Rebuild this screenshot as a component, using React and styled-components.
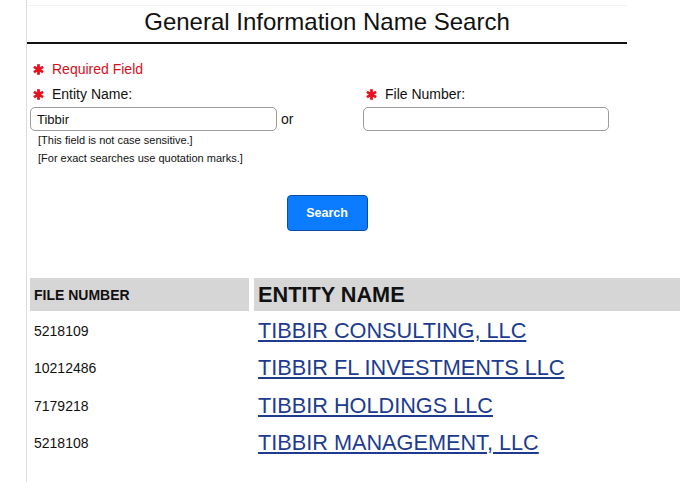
import React from 'react';
import styled, { createGlobalStyle } from 'styled-components';

const Global = createGlobalStyle`
  html, body { margin: 0; padding: 0; background: #fff; }
  body { font-family: "Liberation Sans", Arial, sans-serif; color: #111; }
  * { box-sizing: border-box; }
`;

const Page = styled.div`
  margin-left: 26px;
  padding-top: 5px;
  border-left: 1px solid #dcdcdc;
  min-height: 482px;
  overflow: hidden;
`;

const TitleBar = styled.h1`
  width: 600px;
  margin: 0;
  padding: 1px 0 5px;
  border-top: 1px solid #f3f3f3;
  border-bottom: 2px solid #111;
  font-size: 24px;
  font-weight: normal;
  line-height: 30px;
  text-align: center;
  color: #111;
`;

const Form = styled.div`
  padding: 16px 0 0 3px;
`;

const Label = styled.div`
  display: flex;
  align-items: center;
  gap: 8px;
  padding-left: 3px;
  height: 18px;
  font-size: 14px;
  line-height: 18px;
  color: ${p => (p.$required ? '#d4101e' : '#111')};
`;

const FieldsGrid = styled.div`
  display: grid;
  grid-template-columns: 333px 1fr;
  margin-top: 7px;
`;

const Field = styled.div`
  display: flex;
  flex-direction: column;
`;

const InputRow = styled.div`
  display: flex;
  align-items: center;
  gap: 4px;
  margin-top: 4px;
  font-size: 14px;
`;

const TextInput = styled.input`
  width: ${p => p.$w}px;
  height: 24px;
  border: 1px solid #9b9b9b;
  border-radius: 5px;
  padding: 0 6px;
  font-family: "Liberation Sans", Arial, sans-serif;
  font-size: 13px;
  color: #111;
  background: #fff;
  outline: none;
`;

const Help = styled.div`
  padding-left: 8px;
  font-size: 11px;
  line-height: 18px;
  color: #111;
`;

const ButtonRow = styled.div`
  width: 600px;
  display: flex;
  justify-content: center;
  margin-top: 28px;
`;

const SearchButton = styled.button`
  width: 81px;
  height: 36px;
  background: #0b7bff;
  border: 1.5px solid #0e4aa3;
  border-radius: 4px;
  color: #fff;
  font-family: "Liberation Sans", Arial, sans-serif;
  font-weight: bold;
  font-size: 12.5px;
  cursor: pointer;
`;

const Table = styled.div`
  margin: 47px 0 0 3px;
  display: flex;
  flex-direction: column;
`;

const Row = styled.div`
  display: grid;
  grid-template-columns: 219px 1fr;
  column-gap: 5px;
  height: ${p => (p.$header ? '33px' : '37.3px')};
  margin-bottom: ${p => (p.$header ? '1.5px' : '0')};
`;

const HeadCell = styled.div`
  display: flex;
  align-items: center;
  padding-left: 4px;
  background: #d6d6d6;
  font-weight: bold;
  font-size: ${p => p.$size}px;
  color: #111;
`;

const Cell = styled.div`
  display: flex;
  align-items: center;
  padding-left: 4px;
  font-size: 14px;
  color: #111;
`;

const EntityLink = styled.a`
  font-size: 21.7px;
  color: #1d3c8f;
  text-decoration: underline;
  text-underline-offset: 2px;
`;

const Asterisk = () => (
  <svg width="11" height="11" viewBox="0 0 11 11" aria-hidden="true">
    <g stroke="#e8101c" strokeWidth="2.8">
      <line x1="5.5" y1="0.2" x2="5.5" y2="10.8" />
      <line x1="0.9" y1="2.85" x2="10.1" y2="8.15" />
      <line x1="0.9" y1="8.15" x2="10.1" y2="2.85" />
    </g>
  </svg>
);

const results = [
  { num: '5218109', name: 'TIBBIR CONSULTING, LLC' },
  { num: '10212486', name: 'TIBBIR FL INVESTMENTS LLC' },
  { num: '7179218', name: 'TIBBIR HOLDINGS LLC' },
  { num: '5218108', name: 'TIBBIR MANAGEMENT, LLC' },
];

export default function App() {
  return (
    <>
      <Global />
      <Page>
        <TitleBar>General Information Name Search</TitleBar>
        <Form>
          <Label $required>
            <Asterisk />
            <span>Required Field</span>
          </Label>
          <FieldsGrid>
            <Field>
              <Label>
                <Asterisk />
                <span>Entity Name:</span>
              </Label>
              <InputRow>
                <TextInput $w={247} defaultValue="Tibbir" />
                <span>or</span>
              </InputRow>
              <Help>
                <div>[This field is not case sensitive.]</div>
                <div>[For exact searches use quotation marks.]</div>
              </Help>
            </Field>
            <Field>
              <Label>
                <Asterisk />
                <span>File Number:</span>
              </Label>
              <InputRow>
                <TextInput $w={246} defaultValue="" />
              </InputRow>
            </Field>
          </FieldsGrid>
        </Form>
        <ButtonRow>
          <SearchButton>Search</SearchButton>
        </ButtonRow>
        <Table>
          <Row $header>
            <HeadCell $size={14}>FILE NUMBER</HeadCell>
            <HeadCell $size={21.7}>ENTITY NAME</HeadCell>
          </Row>
          {results.map(r => (
            <Row key={r.num}>
              <Cell>{r.num}</Cell>
              <Cell>
                <EntityLink href="#">{r.name}</EntityLink>
              </Cell>
            </Row>
          ))}
        </Table>
      </Page>
    </>
  );
}
